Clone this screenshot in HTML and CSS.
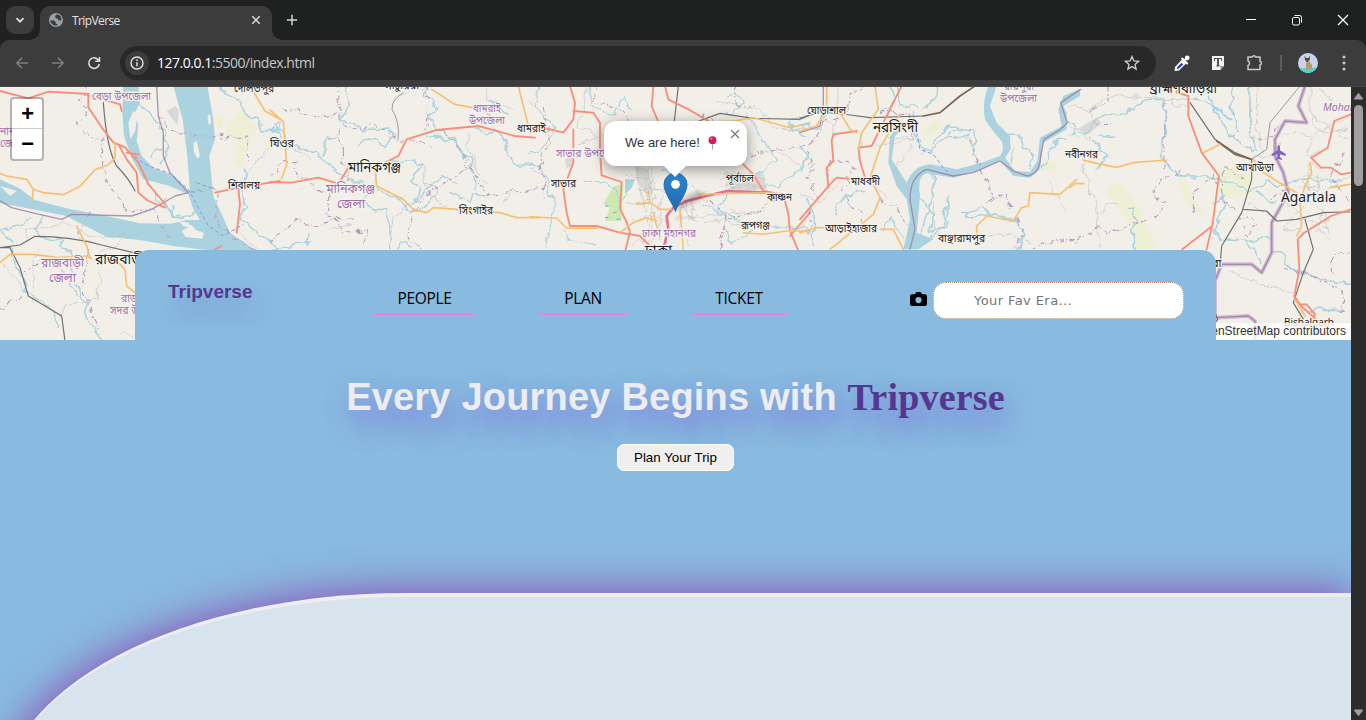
FILE: index.html
```html
<!DOCTYPE html>
<html lang="en">
<head>
<meta charset="utf-8">
<title>TripVerse</title>
<link rel="stylesheet" href="styles.css">
</head>
<body>
<div class="browser">
  <div class="tabstrip">
    <div class="tab-search"><svg width="12" height="12" viewBox="0 0 12 12"><path d="M2.500 4.200L6 7.700 9.500 4.200" fill="none" stroke="#e3e3e3" stroke-width="1.700"/></svg></div>
    <div class="tab">
      <svg class="globe" width="14" height="14" viewBox="0 0 14 14"><circle cx="7" cy="7" r="7" fill="#9aa0a6"/><path d="M8 1.300L6.500 2.500 6 4 7.500 5.500 9 5.500 9 7l2 .500 1.600-.500Q13 4 10.500 2.200ZM1.400 7.200L5 7.500 7 9.200 6.500 10.500 8.500 11.500 8 12.700Q5 13 3 11 1.200 9.500 1.400 7.200Z" fill="#3c3c3c"/></svg>
      <span class="tab-title">TripVerse</span>
      <svg class="tab-close" width="10" height="10" viewBox="0 0 10 10"><path d="M1.300 1.300l7.400 7.400M8.700 1.300L1.300 8.700" stroke="#dedede" stroke-width="1.500"/></svg>
    </div>
    <svg class="new-tab" width="12" height="12" viewBox="0 0 12 12"><path d="M6 .800v10.400M.800 6h10.400" stroke="#d5d5d5" stroke-width="1.500"/></svg>
    <div class="window-buttons">
      <svg width="12" height="12" viewBox="0 0 12 12"><path d="M1 5.500h10" stroke="#fff"/></svg>
      <svg width="12" height="12" viewBox="0 0 12 12" fill="none" stroke="#fff"><rect x="1.500" y="3.500" width="7" height="7.500" rx="1.300"/><path d="M3.500 1.500h5.200a1.800 1.800 0 0 1 1.800 1.800v5.400"/></svg>
      <svg width="12" height="12" viewBox="0 0 12 12"><path d="M1 1l10 10M11 1L1 11" stroke="#fff" stroke-width="1.200"/></svg>
    </div>
  </div>
  <div class="toolbar">
    <svg width="14" height="14" viewBox="0 0 14 14" fill="none" stroke="#7d7d7d" stroke-width="1.500"><path d="M13 7H2M7 1.800L1.800 7 7 12.200"/></svg>
    <svg width="14" height="14" viewBox="0 0 14 14" fill="none" stroke="#7d7d7d" stroke-width="1.500"><path d="M1 7h11M7 1.800L12.200 7 7 12.200"/></svg>
    <svg width="14" height="14" viewBox="0 0 14 14" fill="none" stroke="#dadada" stroke-width="1.600"><path d="M11.700 4.500A5.300 5.300 0 1 0 12.300 8M12.500 1v4.300H8.200"/></svg>
    <div class="address">
      <div class="info"><svg width="14" height="14" viewBox="0 0 14 14"><circle cx="7" cy="7" r="6" fill="none" stroke="#e3e3e3" stroke-width="1.400"/><path d="M7 6.200v4M7 3.500v1.500" stroke="#e3e3e3" stroke-width="1.500"/></svg></div>
      <span class="url"><b>127.0.0.1</b>:5500/index.html</span>
      <svg class="star" width="16" height="16" viewBox="0 0 16 16"><path d="M8 1.500l1.900 4.400 4.700.400-3.600 3.100 1.100 4.700L8 11.600 3.900 14.100 5 9.400 1.400 6.300l4.700-.4z" fill="none" stroke="#cfcfcf" stroke-width="1.300"/></svg>
    </div>
    <div class="extensions">
      <svg class="dropper" width="18" height="18" viewBox="0 0 18 18"><path d="M1.500 17l.500-4 8-8.500 4 4-8 8z" fill="#fff"/><path d="M3.800 15.200l.6-2.100L8.500 8.800l1.600 1.600-4.200 4.200z" fill="#2639c7"/><path d="M9.200 4.500l5 5M11 7l3.500-3.500" stroke="#fff" stroke-width="2" stroke-linecap="round"/><circle cx="14.200" cy="3.900" r="2.400" fill="#fff"/></svg>
      <svg class="type" width="14" height="16" viewBox="0 0 14 16"><path d="M1 1h12v10l-3.500 4H1z" fill="#f4f4f4"/><path d="M3 3.500h8M3.500 3.500v2.500M10.500 3.500v2.500M5.200 11h3.600" stroke="#555" fill="none"/><path d="M7 3.500v7.500" stroke="#444" stroke-width="1.800"/><path d="M9.500 15v-4H13z" fill="#8d8d8d"/></svg>
      <svg class="puzzle" width="18" height="18" viewBox="0 0 18 18"><path d="M2 3h4.200a1.900 1.900 0 0 1 3.600 0H14v4.200a1.900 1.900 0 0 1 0 3.700v4.600H2v-4a2.400 2.400 0 0 0 0-4.500z" fill="none" stroke="#c9c9c9" stroke-width="1.500"/></svg>
      <i class="divider"></i>
      <svg class="avatar" width="20" height="20" viewBox="0 0 20 20"><defs><clipPath id="av"><circle cx="10" cy="10" r="10"/></clipPath></defs><g clip-path="url(#av)"><path fill="#c9d3ee" d="M0 0h20v20H0z"/><path fill="#4fd3c4" d="M0 15.500l20-1V20H0z"/><path fill="#b99c6a" d="M8 8h3l3 4v4H8z"/><path fill="#59452f" d="M6.500 2.500L8 5h2.500L12 2.500l-.3 4.500L9 9 7 7z"/></g></svg>
      <svg width="4" height="16" viewBox="0 0 4 16" fill="#c9c9c9"><circle cx="2" cy="2" r="1.500"/><circle cx="2" cy="8" r="1.500"/><circle cx="2" cy="14" r="1.500"/></svg>
    </div>
  </div>

  <div class="viewport">
    <main class="page">
      <section class="map">
        <svg class="tiles" width="1351" height="253" viewBox="0 87 1351 253">
          <defs>
            <!-- gives streams and boundaries their meander -->
            <filter id="meander" x="-5%" y="-5%" width="110%" height="110%"><feTurbulence type="fractalNoise" baseFrequency=".03" numOctaves="2" seed="4"/><feDisplacementMap in="SourceGraphic" scale="30" xChannelSelector="R" yChannelSelector="G"/></filter>
          </defs>
          <!-- western tiles -->
          <g transform="translate(0 86) scale(.33333)">
            <path class="park" d="M690 100l40-30 45 60-20 20-30 90-25-10 15-70-40-10zM650 85l25 10-10 35-18-10z"/>
            <path class="grey" d="M500 75l25-15 12 12-5 45-20-25z"/>
            <path class="water" d="M0 280L60 308 105 342 205 368 320 390 420 412 510 413 560 402 600 402 580 370 565 325 510 300 430 280 395 215 372 150 367 80 370 0H415L420 50 405 80 415 120 410 165 425 210 460 245 520 270 570 318 562 210 548 100 520 0H622L640 100 645 160 628 210 640 330 690 440 770 495H660L600 490 520 480 420 462 320 452 240 412 200 390 60 362 0 352Z"/>
            <path class="land" d="M385 110l15-35 12 10-6 50-15 25zM580 170l10-5 10 45-8 8-10-20zM622 90l8-5 4 25-8 8zM545 435l30-18 12 15 25 8-5 18-50-5zM535 405l30 5 10 15-25-5zM0 300l50 15-20 15z"/>
            <path class="wline" d="M415 60C460 70 455 110 485 125 510 140 490 180 500 210L480 240M455 210q5-20 20-20M440 280c0 30 30 60 80 100M520 350c-15 50 20 60 60 30l20 20M500 340q0 50 40 50M0 430l40 40M125 395l-20 30 20 25 60 15 0 25M180 485q50 20 30 60c-10 30 30 50 30 80l20 30-5 40 60 70M190 550l20 50 20 30M90 400l-20 20-60 10M740 250l-15 80 15 30-20 40 40 30 80 60M660 0l15 25 50 20 5 40 40 10 20 40 50-5M815 120l25 15M30 485l50 130 80 60 10 40"/>
            <path class="minor" d="M80 465v-35l120-20 100 50 90-10 20 10M300 550l-5 90-100 20-10 30M120 500l-20 20v130M10 540l70 80M355 460q-5 30-60 40M360 750l20-15 20 20M750 250l70-80M700 430l80 60"/>
            <path class="bound" d="M250 0l20 25-35 20 30 30-30 35 20 30 50 20 0 80 20 50 50 80 90 5 40 80M265 380l-30 60 30 60-20 110 20 40 30 80M475 90l40 50 130 15 20-15 0 20 80-10 0 80M70 560l50-30M0 670l70-40"/>
            <path class="frontier" d="M470 0l5 90 15 50 0 70 20 50 55 60-40 10-70 40-60 20-180-5-30 15-90-20-60-15-50-30"/>
            <path class="bound" d="M570 322l60-15 18 5 0 90 40 50 80 40"/>
            <path class="ferry" d="M405 210l30 25 80 30 50 45 60 110 45 30 60-35M590 290l40 15"/>
            <path class="rail" d="M310 50q10 140 40 190 35 35 55 75M0 485l60-8 45-26q110 0 200 26l95 23M0 485h30l30 60 25 85 100 60 10 75"/>
            <path class="trunk" d="M0 15l85 22 60-20 120 7 0 40 40 60 35 45 35 15 40 45 30 65 50 60M380 200l35 5M355 175l25 45 30 40 5 60 30 25 50 20M275 30l85 25 5 20M645 320l70-15 5 50-10 85M715 305l125-20M645 490l20-10"/>
            <path class="primary" d="M0 262l20 8 60 10 20 30 30 10 60 6 50-25 45-50 40-15 20-20 0-45M100 310l-3 28M0 530l30-25 70 0 75 10 80-5 20 8M230 420l30 60 10 35M345 520l30 30 5 50 25 20M750 0l45 75 45 25"/>
          </g>
          <!-- Manikganj -->
          <g transform="translate(270 86) scale(.33333)">
            <path class="wline" d="M225 0l10 60-25 50 50 0 20 20 80 0 10 20-30 30-50-25-30 30M0 130l30-20 20 65 90 25 60 60 60 30 60 15 40 25q40 10 60 50 50 0 80-70l-30-20M0 130l30 30M370 225l90 5-40 50 30 30-20 40-20 10M290 320v35l30 20 30-10 5 50 5 70M165 210v-50l45-10M470 0q-20 40 20 40l10 30-30 20 30 40 50 30 30 40 20 20 20 90M480 150l80 20 20 40M620 125l30 20 20-10 30 20 10 40 20 40 60 0 30 20M430 350l60-60 30-20 40 20M540 320l60 30 10-30 40 10M660 40l50 50M120 440l-10 40M0 495l120-30M385 490q10-40 40-5"/>
            <path class="minor" d="M365 50l35-30 70-20M50 190l40 5 30 25M590 140l10 60 20 60 30 40M180 435l60-20M420 350l-50 40-10 60M460 240l10 80 60 40M320 240v60M650 0v40l80 30M700 350l30-40"/>
            <path class="bound" d="M200 0l10 50 0 60 40 20 60-15 80 50 60 0 30 20M210 130l10 100 20 30-20 40M40 65l50 10 40 20 70-10M0 270l30-20 0-20 50 0 10 40 80 60 0 60 80 10M0 470l80-65 50 10 70-15 20 40 70-10-10 50M470 0l0 100-10 30 60 10 60 60 15 40-60 50-50 20-40 40-30 60 0 50 60 50M600 240l50 90 160-25"/>
            <path class="rail thin" d="M400 20q-35 20-34 50 25 40 18 90"/>
            <path class="trunk" d="M0 288l65 2 80-15 60 18 35-55M345 230l40-20 25-50 90-28 125-12 110 30 60 5"/>
            <path class="primary" d="M0 72l40 35 10 130-15 40M315 240l5 60 80 40 30 30 40 10 20-15 200 15 50 15h70M485 10l70 45 80 15 60 45M745 0l35 140"/>
          </g>
          <!-- Dhaka -->
          <g transform="translate(530 86) scale(.33333)">
            <path class="wood" d="M250 300l30-5-5 110-50 0 15-40-20-10z"/>
            <path class="water" d="M285 280l30 0-10 25-20 20z"/>
            <path class="grey" d="M315 240l40 10 15 70-20 10-30-50zM105 220l20-10 5 30-20 5zM580 260l120 0 10 50-100 10z"/>
            <path class="wline fine" d="M30 0q-30 50 10 90 60 50 10 70-10 40-50 40M0 240q40 10 60 80 25 30 0 90l-10 75M170 0l20 60 60 30 30-60 20 40M170 280l80 20 20 40 20-10M100 430l20 30 80 20M400 250q60 30 60 60M590 30l30-10 20 30-30 40-20-20M650 80l30 60 60 80-60 50-60 20-60 80 60 30 90 30M840 150q-70-20-60-50l60-10M520 350l60 40 20 80 90-50 150 10M830 200q-30 90-130 110"/>
            <path class="minor" d="M150 60l20 20M170 0l-20 120 60 30M150 170l60-20 80-10M320 240l20 120 20 80-20 50M290 270l80 10 10 60-90 10M330 310h80M350 250v130M365 250v230M380 310l90 30 60-20M450 340v80l-40 30M470 340l10 60M490 340l0 60M430 400l200-20M590 250v60M610 260v60M630 270v50M650 260v60M670 260v60M570 280h140M570 300h150M440 200l20 80 60 60M520 410l60-10 70 20M560 50l120 20 60 60 80 0M0 50l50 50M750 200l60 40M310 400l70-10M390 340v80M400 330l-30 50 40 30M600 370l60 20 50-20M450 430l30 50M370 440l-60 40M440 370h55M450 355l50 55"/>
            <path class="bound" d="M40 60l20 120-30 30 20 140M200 0l-10 40 90 40 20 40M520 80l80 80 20 60 60-20 150-20M620 0v60l60 0M740 330l-60 50-90 20-20 80M570 490l20-60-20-60-60-40"/>
            <path class="ferry" d="M225 360h20M250 380l20-5M225 395h20M260 400l20-3"/>
            <path class="rail" d="M445 0l-12 105M440 135l75-33 55-20 100 15 140 3 30-13"/>
            <path class="trunk" d="M120 0l15 50-5 50-30 40-60-15-40 15M130 75l60 5 20 30 0 90 5 68 60 20-5 80 20 40 10 30-20 80M130 130v100l-30 80 10 70 10 40 80 0 70 20 60 10 50 50M370 0l-5 60 25 60M405 0l10 40 60 30 60 35M640 235l30 30 30 50 60 10 15 60 5 50 30 70M840 380l-60 70"/>
            <path class="motor" d="M400 490l15-60-5-40 20-25 40-20 60-15 60-15 120 5"/>
            <path class="primary thin" d="M0 392l80 5 30 30 90 0M355 315l5 35-40 5M510 325l200-5M490 110l120-5 60-10 110 30 60-15M640 440l60 5 70-10 70 0M450 370l10 120M370 380l20 80"/>
            <path class="primary" d="M270 440l40-30 40-15 30 10M320 355l40-5 30 20 35 0"/>
          </g>
          <!-- Narsingdi and the Meghna -->
          <g transform="translate(800 86) scale(.33333)">
            <path class="park" d="M370 125l45-30 15 20-45 45zM730 215l45 20-20 25-30-10z"/>
            <path class="water" d="M565 0Q545 50 555 100 580 140 605 165 615 190 600 210L545 230 470 250 390 235Q340 240 320 290L275 220 285 150 320 120 305 110 270 150 265 230 290 300 320 340 330 400 310 490H355L400 460 350 440 360 330Q350 270 380 262L460 275 540 252 600 225 640 270 690 275 720 250 730 170 800 130V80L790 60 840 30V8L790 30 775 70 785 120 720 155 712 225 690 258 645 255 615 215 632 190 630 150 590 110 570 60 590 0Z"/>
            <path class="wline" d="M340 80l10 80 40 40 50-50 30-20 50 5 10 30-20 10 20 50 10 30M400 170q50-70 90-40M430 150l80 5M630 145l30 0 10 40 30 20-10 40M640 190l-10 50M270 0q30 60-25 75M290 0l10 60 50 0M410 0q0 60-40 70M490 380l60-15 20 20 80 20 20 30-10 60M500 380v15l80-10M440 330v80l-50 50M400 260l0 60-20 60-20 70M350 330l50 50-10 60 40-20 5-60M20 340l20 40 0 100M0 180l20 40-20 30M105 380l30-50 50-10M250 430l20-30 40 60M730 250l40-90 30 0M800 110l40 40M0 115l60 10 20-40"/>
            <path class="minor" d="M0 100l60-30 50 80M0 320l60 30 60-60M120 0v60l-20 60M230 180l100-20 0 30-40 50 10 60M250 150l90 10M570 450l60-10 60 30M400 280v160M740 280l60 100M220 300l40 30M180 230v-90"/>
            <path class="bound" d="M70 110l60-20 20-60 40-30M70 110l-50 80 20 60-20 30 50 60M90 270l0-40 50-10 20 30-30 60 20 50 40 20-10 40M30 370v80M240 340l50 20 40 60M540 250l30 40 5 40-15 20 60-30 20 60M650 400l20 30-20 60M240 80l90 0 10 80M690 490l80-30 70 10M380 190l-20 20"/>
            <path class="frontier" d="M330 490l15-60-15-90q0-70 50-90l80 20 60-10 80-35 40 30 40 15q40-5 42-60l10-50 50-30 20-20-20-60 60-40M70 0v60l-10 60-60 20"/>
            <path class="bound" d="M510 130l0 60 30 50"/>
            <path class="ferry" d="M350 140l10 50 40 15 30 40 20 20"/>
            <path class="rail" d="M0 97l60-20 90 10 60 8 160-5"/>
            <path class="brown" d="M370 90l50-10 60-50 45-30"/>
            <path class="trunk" d="M305 0l-40 80-50 100-40 5 5 40 15 50M170 135l-70 10-5 20 5 60-20 20 5 60M0 400l90-105 20-20 60 5"/>
            <path class="primary" d="M80 0v70l-30 50-50 15M120 80l30 50 20 10M225 0l10 70-50 70-10 50M300 85l-60 100-30 90 30 60-20 50-130 105M240 430h40l30 60M0 440l50-15 180 0M530 470v-50l30-30 80 15 25-40 20-5 5-40 90 5 50-45"/>
          </g>
          <!-- Agartala -->
          <g transform="translate(1070 86) scale(.33333)">
            <path class="park" d="M105 315l40-30 70 90 45 115h-60l-15-70zM440 250l80-15 30 55 0 30-80 20-30-30zM325 280l20-10 20 60 40 50-20 0-50-50z"/>
            <path class="grey" d="M20 130l60-35 15 15-40 35z"/>
            <path class="wline wide" d="M0 150l40-5 60-60 60 0 60-40 60-5 5 100-10 70 30 40 30 20 80 0 80 20 40 30 60-30 50 10 60-20 40 5 60 0M370 40l60 20 30 60 60 60 30 15M400 0l30 60 50 40M490 0l-5 70 20 70M540 0v120l15 70M60 150l50 60-20 30M95 150l35 5M170 365l20 0 10 40-15 30 10 60M430 350l20-20 20 20-40 80 20 30 70 5 80-10M525 465l50 70M610 490l30 10 20 50 50 15 70 20 60 10M700 680l40-10 80 0M565 320l30 30 30 0"/>
            <path class="minor" d="M0 60l60 10 60-40 240 10M310 0v60h50M35 220l10 60 30 60 15 150M80 380l60-30M0 120l80 60M720 0v90l30 50 80-10M640 140l90 10 110-60M720 150l-10 60 60-20M690 300l60 20 90-50M700 320l60 60-20 60M640 340l70 60 70 30M720 240v80M740 260v70M690 340l80-70M670 320l90 20M710 350l-70 80 60 10M720 400l60 60M480 550l60 35 130 35M550 210l60 0 20-40M580 200l-20-60 0-140M740 0l60 60M620 400l-90-50M760 370l20 70M700 280l20 40M710 240h50M700 270h60M725 90l115 70"/>
            <path class="bound" d="M120 0v50l-60 20 20 50 50-10M285 50v200M330 260l-80 40 0 30 40 15-30 45-150 50-20-20-40 30-50 15M370 375v-50l60-60 20 60 50 50M510 400q60-20 35 40-30 20-25-20M640 550l60 15 60 20 60 30 0 60M790 560v-50l50-10M460 300v-60l20 20 50 20M560 160l50-10 20-40M820 200l-40 70 60 80M650 310l-50 30"/>
            <path class="halo" d="M650 -20h90l-35 20-20 60 25 50-65-5-30 55 0 50 25 50 15 60-50 90 0 90-30 60-30-25-90 0-20 50v110l100-5 20 15v100"/>
            <path class="frontier" d="M705 0l-20 60 25 50-65-5-30 55 0 50 25 50 15 60-50 90 0 90-30 60-30-25-90 0-20 50v110l100-5 20 15v100"/>
            <path class="rail" d="M360 50l75 110 60 40 50 20 0 60-30 100-60 100-5 60M520 370l70 5 30 30 60-5 80-20 60-2 20 0M705 400l25 90-30 70-30 90 30 50M435 680l8 20-15 20"/>
            <path class="rail thin" d="M690 0l-90 110-10 80-45 30"/>
            <path class="brown" d="M440 165l55 40 50 15"/>
            <path class="trunk" d="M320 0l0 20 35 10 0 60 40 110 52 70-20 150-90 70M425 425l-15 65M843 85l-50 20-20 80-40 25-10 5 30 30 30 0 30 20 30-5M843 370l-60 20-80 50-20 20 5 90-15 80 20 30 45 40M690 655l20 0 25 30-5 10"/>
            <path class="primary" d="M40 222l40 10 60 12 50-14 100-8M400 200l50-25M550 220l30 40 40 25 60 35M720 230l5 30-20 40-15 50 5 70-15 30M780 305l60-10M0 305l15-12 28 0M675 640l30 50"/>
            <path class="plane" d="M626 177q4 0 4 8v8l17 11v6l-17-5v9l6 4v4l-10-3-10 3v-4l6-4v-9l-17 5v-6l17-11v-8q0-8 4-8z"/>
          </g>
          <g class="places">
            <text class="area" x="92" y="100" textLength="59" lengthAdjust="spacingAndGlyphs">বেড়া উপজেলা</text>
            <text class="area" x="0" y="135">নান</text>
            <text class="area" x="0" y="147">জেলা</text>
            <text class="town" x="234" y="92" textLength="40" lengthAdjust="spacingAndGlyphs">দৌলতপুর</text>
            <text class="town" x="270" y="147" textLength="24" lengthAdjust="spacingAndGlyphs">ঘিওর</text>
            <text class="town" x="228" y="189" textLength="32" lengthAdjust="spacingAndGlyphs">শিবালয়</text>
            <text class="city" x="348" y="172" textLength="53" lengthAdjust="spacingAndGlyphs">মানিকগঞ্জ</text>
            <text class="area big" x="326" y="193" textLength="49" lengthAdjust="spacingAndGlyphs">মানিকগঞ্জ</text>
            <text class="area big" x="337" y="208" textLength="28" lengthAdjust="spacingAndGlyphs">জেলা</text>
            <text class="town" x="385" y="89" textLength="34" lengthAdjust="spacingAndGlyphs">সাটুরিয়া</text>
            <text class="area" x="473" y="112" textLength="28" lengthAdjust="spacingAndGlyphs">ধামরাই</text>
            <text class="area" x="469" y="124" textLength="36" lengthAdjust="spacingAndGlyphs">উপজেলা</text>
            <text class="town" x="517" y="132" textLength="29" lengthAdjust="spacingAndGlyphs">ধামরাই</text>
            <text class="town" x="459" y="214" textLength="34" lengthAdjust="spacingAndGlyphs">সিংগাইর</text>
            <text class="town" x="551" y="187" textLength="25" lengthAdjust="spacingAndGlyphs">সাভার</text>
            <text class="area" x="556" y="157" textLength="66" lengthAdjust="spacingAndGlyphs">সাভার উপজেলা</text>
            <text class="town" x="726" y="182" textLength="28" lengthAdjust="spacingAndGlyphs">পূর্বাচল</text>
            <text class="town" x="767" y="201" textLength="25" lengthAdjust="spacingAndGlyphs">কাঞ্চন</text>
            <text class="town" x="741" y="229" textLength="29" lengthAdjust="spacingAndGlyphs">রূপগঞ্জ</text>
            <text class="area" x="642" y="237" textLength="54" lengthAdjust="spacingAndGlyphs">ঢাকা মহানগর</text>
            <text class="city" x="645" y="255" textLength="27" lengthAdjust="spacingAndGlyphs">ঢাকা</text>
            <text class="town" x="807" y="114" textLength="39" lengthAdjust="spacingAndGlyphs">ঘোড়াশাল</text>
            <text class="city" x="873" y="132" textLength="45" lengthAdjust="spacingAndGlyphs">নরসিংদী</text>
            <text class="town" x="851" y="185" textLength="29" lengthAdjust="spacingAndGlyphs">মাধবদী</text>
            <text class="town" x="825" y="232" textLength="52" lengthAdjust="spacingAndGlyphs">আড়াইহাজার</text>
            <text class="town" x="938" y="242" textLength="47" lengthAdjust="spacingAndGlyphs">বাঞ্ছারামপুর</text>
            <text class="area" x="1004" y="90" textLength="30" lengthAdjust="spacingAndGlyphs">রায়পুরা</text>
            <text class="area" x="1000" y="102" textLength="37" lengthAdjust="spacingAndGlyphs">উপজেলা</text>
            <text class="town" x="1065" y="158" textLength="33" lengthAdjust="spacingAndGlyphs">নবীনগর</text>
            <text class="city" x="1150" y="93" textLength="67" lengthAdjust="spacingAndGlyphs">ব্রাহ্মণবাড়িয়া</text>
            <text class="town" x="1236" y="171" textLength="38" lengthAdjust="spacingAndGlyphs">আখাউড়া</text>
            <text class="town" x="1212" y="267">বা</text>
            <text class="area state" x="1323" y="111">Mohanpur</text>
            <text class="agartala" x="1281" y="202" textLength="55" lengthAdjust="spacingAndGlyphs">Agartala</text>
            <text class="bish" x="1284" y="326" textLength="50" lengthAdjust="spacingAndGlyphs">Bishalgarh</text>
            <text class="area big" x="41" y="267" textLength="43" lengthAdjust="spacingAndGlyphs">রাজবাড়ী</text>
            <text class="area big" x="49" y="282" textLength="27" lengthAdjust="spacingAndGlyphs">জেলা</text>
            <text class="city" x="95" y="264" textLength="50" lengthAdjust="spacingAndGlyphs">রাজবাড়ী</text>
            <text class="area" x="121" y="302">রাজবাড়ী</text>
            <text class="area" x="110" y="314">সদর উপজেলা</text>
          </g>
        </svg>
        <div class="zoom"><span>+</span><span>−</span></div>
        <svg class="marker" width="66" height="42" viewBox="0 0 66 42"><defs><linearGradient id="pin" x2="0" y2="1"><stop stop-color="#2e89cb"/><stop offset="1" stop-color="#2068b0"/></linearGradient><filter id="soft"><feGaussianBlur stdDeviation="2"/></filter></defs><path d="M13 39L22 26q14-10 18-5 1 7-15 12z" fill="#000" opacity=".22" filter="url(#soft)"/><path d="M12.500 39.500C11 33 1 21.500 1 12.500a11.500 11.500 0 0 1 23 0C24 21.500 14 33 12.500 39.500z" fill="url(#pin)" stroke="#2272b3"/><circle cx="12.500" cy="12.300" r="4.400" fill="#fff"/></svg>
        <div class="popup">
          <span>We are here!</span>
          <svg width="9" height="14" viewBox="0 0 9 14"><path d="M4.500 7v6.500" stroke="#b9a0ad" stroke-width="1.200"/><circle cx="4.500" cy="4.200" r="3.900" fill="#dd1657"/><ellipse cx="3.300" cy="2.700" rx="1.200" ry=".900" fill="#f6709b"/></svg>
          <svg class="popup-close" width="10" height="10" viewBox="0 0 10 10"><path d="M1 1l8 8M9 1L1 9" stroke="#757575" stroke-width="1.200"/></svg>
          <i class="tip"></i>
        </div>
        <div class="credit">© OpenStreetMap contributors</div>
        <header class="header">
          <h2 class="brand">Tripverse</h2>
          <nav class="nav"><a class="people">PEOPLE</a><a class="plan">PLAN</a><a class="ticket">TICKET</a></nav>
          <form class="search">
            <svg width="17" height="15" viewBox="0 0 17 15"><path fill-rule="evenodd" d="M5 2.200L5.800.7Q6.100 0 7 0h3q.900 0 1.200.7L12 2.200h3a2 2 0 0 1 2 2V12a2 2 0 0 1-2 2H2a2 2 0 0 1-2-2V4.200a2 2 0 0 1 2-2zM8.500 5a3 3 0 1 0 0 6.200 3 3 0 1 0 0-6.200z"/></svg>
            <input type="text" placeholder="Your Fav Era...">
          </form>
        </header>
      </section>
      <section class="hero">
        <h1>Every Journey Begins with <span>Tripverse</span></h1>
        <button>Plan Your Trip</button>
      </section>
      <section class="panel"></section>
    </main>
    <aside class="scrollbar">
      <svg width="11" height="8" viewBox="0 0 11 8"><path d="M5.500 .800L10 6.500Q10 7.500 9 7.500H2Q1 7.500 1 6.500z" fill="#9f9f9f"/></svg>
      <i class="thumb"></i>
      <svg class="down" width="11" height="8" viewBox="0 0 11 8"><path d="M5.500 7.200L10 1.500Q10 .500 9 .500H2Q1 .500 1 1.500z" fill="#9f9f9f"/></svg>
    </aside>
  </div>
</div>
</body>
</html>
```

FILE: styles.css
```css
* { box-sizing: border-box; }
body { margin: 0; font-family: "Liberation Sans", Arial, sans-serif; }
svg { display: block; flex: none; }
.browser { width: 1366px; height: 720px; display: flex; flex-direction: column; overflow: hidden; background: #1f2120; }

.tabstrip { height: 40px; display: flex; align-items: center; padding: 0 17px 0 6px; background: #1f2120; }
.tab-search { width: 28px; height: 28px; border-radius: 9px; background: #3c3c3c; display: grid; place-items: center; }
.tab { position: relative; align-self: flex-end; width: 232px; height: 34px; margin-left: 6px; padding: 0 11px 6px 9px; display: flex; align-items: center; border-radius: 10px 10px 0 0; background: #3c3c3c; }
.tab::before, .tab::after { content: ""; position: absolute; bottom: 0; width: 10px; height: 10px; }
.tab::before { left: -10px; background: radial-gradient(circle at 0 0, transparent 9.500px, #3c3c3c 10px); }
.tab::after { right: -10px; background: radial-gradient(circle at 100% 0, transparent 9.500px, #3c3c3c 10px); }
.tab-title { margin: 1px 0 0 9px; font: 12px "Open Sans", sans-serif; letter-spacing: -.6px; color: #e3e3e3; }
.tab-close { margin-left: auto; }
.new-tab { margin-left: 14px; }
.window-buttons { margin-left: auto; display: flex; gap: 34px; }

.toolbar { height: 47px; flex: none; display: flex; align-items: center; padding: 0 20px 1px 15px; background: #3c3c3c; border-bottom: 1px solid #49494b; border-radius: 9px 9px 0 0; }
.toolbar > svg { margin-right: 22px; }
.toolbar > svg:nth-child(3) { margin-right: 19px; }
.address { width: 1036px; height: 34px; border-radius: 17px; background: #282828; display: flex; align-items: center; padding: 0 16px 0 5px; }
.info { width: 24px; height: 24px; border-radius: 50%; background: #3c3c3c; display: grid; place-items: center; }
.url { margin-left: 8px; font: 14px "Open Sans", sans-serif; letter-spacing: -.48px; color: #c7c7c7; }
.url b { font-weight: 400; color: #fff; }
.star { margin-left: auto; }
.extensions { display: flex; align-items: center; margin-left: 17px; }
.dropper { margin-right: 20px; }
.type { margin-right: 21px; }
.puzzle { margin-right: 16px; }
.divider { width: 2px; height: 16px; margin-right: 16px; background: #5c5c5c; }
.avatar { margin-right: 24px; }

.viewport { flex: 1; min-height: 0; display: flex; }
.page { width: 1351px; display: flex; flex-direction: column; background: #89badf; overflow: hidden; }
.map { position: relative; height: 253px; flex: none; background: #f2efe9; overflow: hidden; }
.tiles path { fill: none; stroke-linejoin: round; stroke-linecap: round; }
.tiles .water { fill: #aad3df; }
.tiles .land { fill: #f2efe9; }
.tiles .park { fill: #eef0d5; }
.tiles .wood { fill: #cdebb0; }
.tiles .grey { fill: #d9d9d8; }
.tiles .wline { stroke: #aad3df; stroke-width: 4.500; filter: url(#meander); }
.tiles .wide { stroke-width: 5; }
.tiles .fine { stroke-width: 3.500; }
.tiles .minor { stroke: #c3c2c4; stroke-width: 2; filter: url(#meander); }
.tiles .bound { stroke: #b799bd; stroke-width: 3.300; stroke-dasharray: 14 7 3 7; stroke-linecap: butt; filter: url(#meander); }
.tiles .frontier { stroke: #9c7da3; stroke-width: 4; opacity: .8; }
.tiles .halo { stroke: #c9afcb; stroke-width: 12; opacity: .8; }
.tiles .ferry { stroke: #8796ee; stroke-width: 3; stroke-dasharray: 11 8; stroke-linecap: butt; }
.tiles .rail { stroke: #707070; stroke-width: 3.500; }
.tiles .rail.thin { stroke: #999; stroke-width: 3; }
.tiles .brown { stroke: #7b6655; stroke-width: 5; }
.tiles .trunk { stroke: #f98e78; stroke-width: 5.500; }
.tiles .motor { stroke: #e5718b; stroke-width: 8; }
.tiles .primary { stroke: #f6c071; stroke-width: 5; }
.tiles .primary.thin { stroke-width: 4.500; }
.tiles .plane { fill: #8461c4; }
.places text { font-family: "Noto Sans", "Noto Sans Bengali", "Open Sans", sans-serif; font-size: 11px; fill: #222; paint-order: stroke; stroke: #f6f4ef; stroke-width: 2.500px; stroke-linejoin: round; }
.places .area { fill: #a06fa8; font-size: 10.500px; }
.places .big { font-size: 13px; }
.places .city { font-size: 14px; }
.places .agartala { font-size: 13.500px; }
.places .bish { font-size: 10px; }
.places .state { font-style: italic; }

.zoom { position: absolute; left: 10px; top: 10px; width: 34px; height: 64px; border: 2px solid rgba(0, 0, 0, .25); border-radius: 4px; background: #fff; background-clip: padding-box; display: flex; flex-direction: column; }
.zoom span { height: 29px; padding-left: 1px; font: bold 22px/34px "Liberation Mono", monospace; text-align: center; color: #000; }
.zoom span + span { height: 31px; border-top: 1px solid #ccc; }
.marker { position: absolute; left: 663px; top: 85px; }
.popup { position: absolute; left: 604px; top: 34px; width: 143px; height: 45px; padding: 0 0 2px 21px; display: flex; align-items: center; gap: 8px; border-radius: 12px; background: #fff; box-shadow: 0 3px 14px rgba(0, 0, 0, .4); font-size: 13px; color: #333; }
.popup-close { position: absolute; right: 7px; top: 8px; }
.tip { position: absolute; left: 60px; top: 45px; border: 11px solid transparent; border-top-color: #fff; border-bottom: 0; }
.credit { position: absolute; right: 0; bottom: 0; padding: 0 5px; font-size: 12px; line-height: 17px; background: rgba(255, 255, 255, .8); color: #333; }

.header { position: absolute; left: 135px; top: 163px; width: 1081px; height: 90px; display: flex; align-items: flex-start; background: #89badf; border-radius: 14px 14px 0 0; }
.brand { width: 84px; margin: 30px 0 0 33px; font-size: 19px; line-height: 23px; color: #55378f; text-shadow: 5px 13px 20px rgba(123, 104, 230, .35); }
.nav { display: flex; gap: 63px; margin: 34px 0 0 121px; }
.nav a { height: 31px; border-bottom: 2px solid #f57af0; border-radius: 1px; text-align: center; font: 15.500px/28px "Open Sans", sans-serif; letter-spacing: -.3px; color: #000; }
.people { width: 103px; }
.plan { width: 89px; padding-right: 1px; }
.ticket { width: 97px; padding-right: 1px; }
.search { display: flex; align-items: center; gap: 6px; margin: 32px 0 0 122px; }
.search svg { margin-top: -2px; }
.search input { width: 251px; height: 37px; padding: 0 0 0 40px; border: 1px dotted #a58461; border-radius: 13px; font: 13px "DejaVu Sans", sans-serif; letter-spacing: .42px; background: #fff; }
.search input::placeholder { color: #757575; }

.hero { height: 253px; flex: none; display: flex; flex-direction: column; align-items: center; padding-top: 34px; }
.hero h1 { margin: 0; font-size: 38px; line-height: 46px; white-space: nowrap; letter-spacing: .2px; color: #ececf1; text-shadow: 5px 13px 26px rgba(118, 82, 225, .68); }
.hero h1 span { font-family: "Liberation Serif", serif; color: #55378f; }
.hero button { width: 117px; height: 27px; margin-top: 24px; padding: 0; border: 1px solid #fff; border-radius: 7px; background: #efefef; font: 13.333px "Liberation Sans", Arial, sans-serif; color: #000; }
.panel { height: 707px; flex: none; border-top: 4px solid #efedef; border-radius: 405px 0 0 0 / 212px 0 0 0; background: #d8e4ed; box-shadow: 0 0 42px #8c46b0; }

.scrollbar { width: 15px; background: #2c2c2c; display: flex; flex-direction: column; align-items: center; padding: 5px 0 3px; }
.thumb { width: 9px; height: 81px; margin-top: 5px; border-radius: 5px; background: #9f9f9f; }
.down { margin-top: auto; }
```
